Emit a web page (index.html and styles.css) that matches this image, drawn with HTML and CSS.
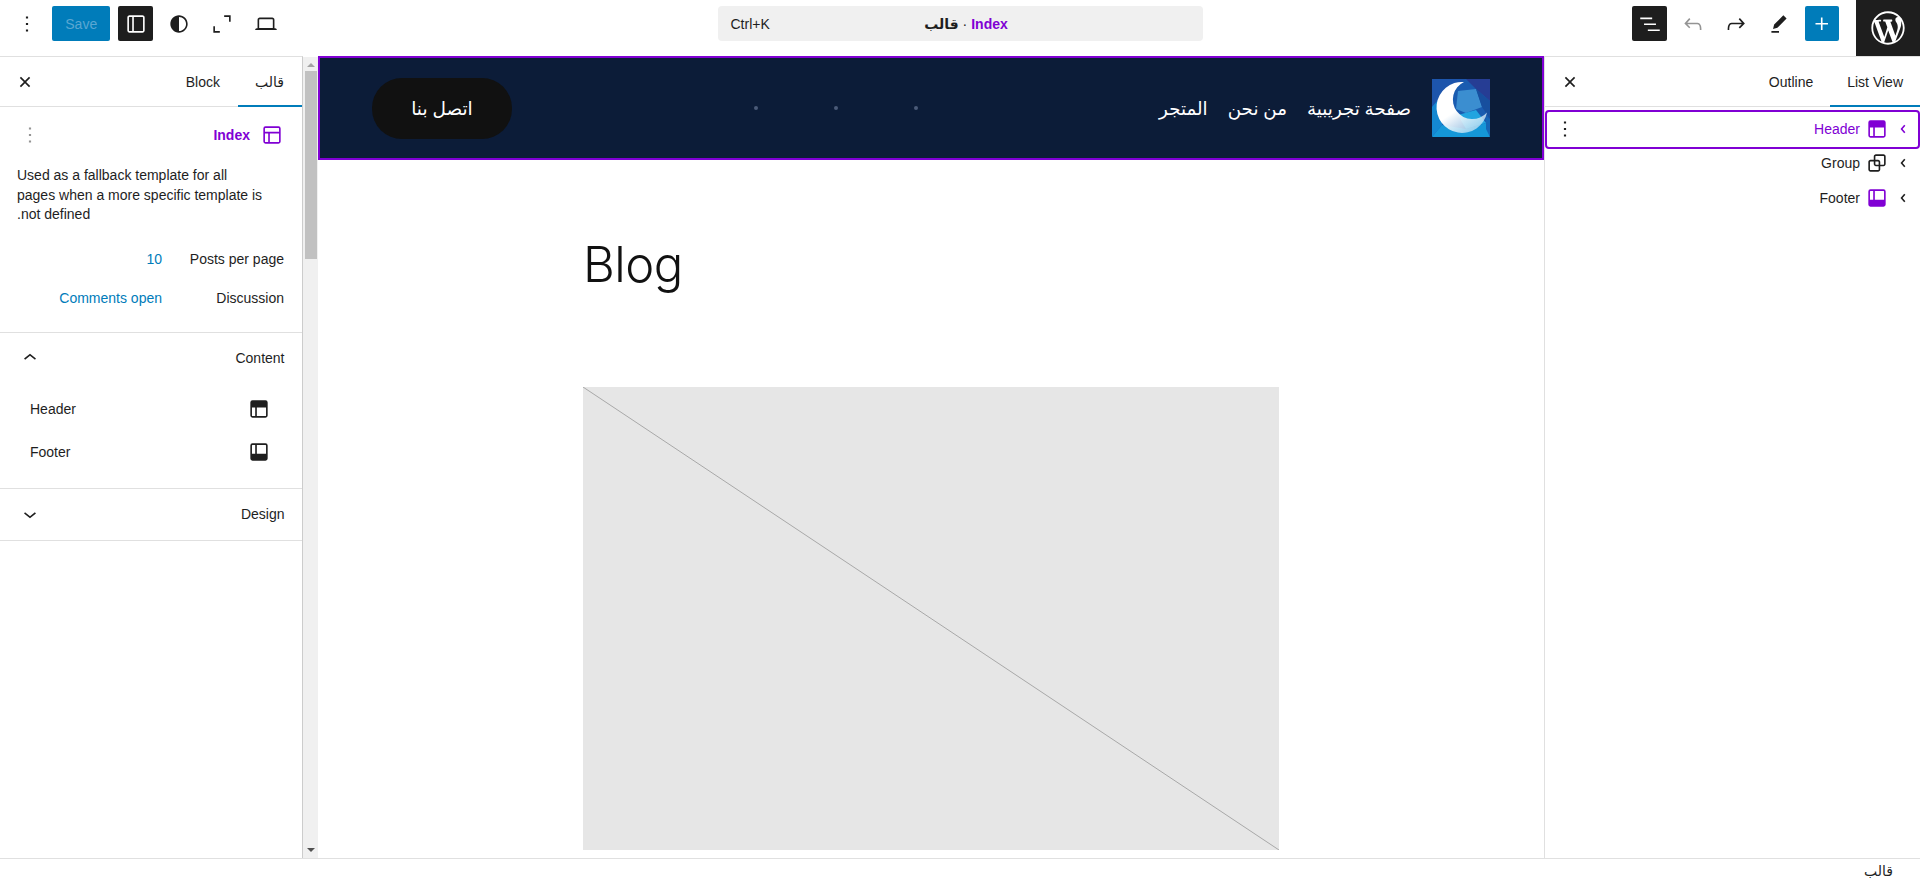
FILE: index.html
```html
<!DOCTYPE html>
<html lang="ar">

<head>
    <meta charset="UTF-8">
    <meta name="viewport" content="width=device-width, initial-scale=1.0">
    <title>Index - Site Editor</title>
    <link rel="stylesheet" href="styles.css">
</head>

<body>
    <svg class="icon-defs" aria-hidden="true">
        <symbol id="i-more" viewBox="0 0 24 24"><path d="M13 19h-2v-2h2v2zm0-6h-2v-2h2v2zm0-6h-2V5h2v2z"/></symbol>
        <symbol id="i-close" viewBox="0 0 24 24"><path d="M12 13.060l3.712 3.713 1.061-1.060L13.061 12l3.713-3.712-1.060-1.060L12 10.938 8.288 7.227l-1.061 1.060L10.939 12l-3.712 3.712 1.060 1.061L12 13.061z"/></symbol>
        <symbol id="i-layout" viewBox="0 0 24 24"><path fill-rule="evenodd" d="M18 5.500H6a.5.5 0 00-.5.5v3h13V6a.5.5 0 00-.5-.5zm.5 5H10v8h8a.5.5 0 00.5-.5v-7.500zm-10 0h-3V18a.5.5 0 00.5.5h2.500v-8zM6 4h12a2 2 0 012 2v12a2 2 0 01-2 2H6a2 2 0 01-2-2V6a2 2 0 012-2z"/></symbol>
        <symbol id="i-header" viewBox="0 0 24 24"><path fill-rule="evenodd" d="M18.500 10.500H10v8h8a.5.5 0 00.5-.5v-7.500zm-10 0h-3V18a.5.5 0 00.5.5h2.500v-8zM6 4h12a2 2 0 012 2v12a2 2 0 01-2 2H6a2 2 0 01-2-2V6a2 2 0 012-2z"/></symbol>
        <symbol id="i-footer" viewBox="0 0 24 24"><path fill-rule="evenodd" d="M18 5.500h-8v8h8.500V6a.5.5 0 00-.5-.5zm-9.500 8h-3V6a.5.5 0 01.5-.5h2.500v8zM6 4h12a2 2 0 012 2v12a2 2 0 01-2 2H6a2 2 0 01-2-2V6a2 2 0 012-2z"/></symbol>
        <symbol id="i-chevron" viewBox="0 0 24 24"><path d="m13.100 16-3.400-4 3.400-4 1.100 1-2.600 3 2.600 3-1.100 1z"/></symbol>
    </svg>

    <!-- Top toolbar -->
    <header class="topbar">
        <div class="tools">
            <button class="tool"><svg><use href="#i-more"/></svg></button>
            <button class="save-btn">Save</button>
            <button class="tool tool-dark"><svg viewBox="0 0 24 24"><path fill-rule="evenodd" d="M18 4H6c-1.100 0-2 .9-2 2v12c0 1.100.9 2 2 2h12c1.100 0 2-.9 2-2V6c0-1.100-.9-2-2-2zM8.500 18.500H6c-.3 0-.5-.2-.5-.5V6c0-.3.2-.5.5-.5h2.500v13zm10-.5c0 .3-.2.5-.5.5h-8v-13h8c.3 0 .5.2.5.5v12z"/></svg></button>
            <button class="tool"><svg viewBox="0 0 24 24"><path fill-rule="evenodd" d="M12 4c-4.400 0-8 3.600-8 8s3.600 8 8 8 8-3.600 8-8-3.600-8-8-8zm0 14.500V5.500c3.600 0 6.500 2.900 6.500 6.500s-2.900 6.500-6.500 6.500z"/></svg></button>
            <button class="tool"><svg viewBox="0 0 24 24"><path d="M14 4h6v6h-1.500V5.500H14V4zM4 14h1.500v4.500H10V20H4v-6z"/></svg></button>
            <button class="tool"><svg viewBox="0 0 24 24"><path fill-rule="evenodd" d="M20.500 16h-.7V8c0-1.100-.9-2-2-2H6.200c-1.100 0-2 .9-2 2v8h-.7c-.8 0-1.500.7-1.500 1.500h20c0-.8-.7-1.500-1.500-1.500zM5.700 8c0-.3.2-.5.5-.5h11.600c.3 0 .5.2.5.5v7.600H5.700V8z"/></svg></button>
        </div>

        <div class="command-bar">
            <span class="shortcut">Ctrl+K</span>
            <span class="doc-title" dir="rtl"><b class="accent">Index</b> · <b>قالب</b></span>
        </div>

        <div class="tools tools-end">
            <button class="tool tool-dark"><svg viewBox="0 0 24 24"><path d="M3 6h11v1.500H3V6Zm3.500 5.500h11V13h-11v-1.500ZM21 17H10v1.500h11V17Z"/></svg></button>
            <button class="tool tool-faded"><svg viewBox="0 0 24 24"><path d="M18.300 11.700c-.6-.6-1.400-.9-2.300-.9H6.700l2.900-3.300-1.100-1-4.500 5L8.500 16l1-1-2.700-2.700H16c.5 0 .9.200 1.300.5 1 1 1 3.400 1 4.500v.3h1.500v-.2c0-1.500 0-4.300-1.500-5.700z"/></svg></button>
            <button class="tool"><svg viewBox="0 0 24 24"><path d="M15.600 6.500l-1.100 1 2.900 3.300H8c-.9 0-1.700.3-2.300.9-1.400 1.500-1.400 4.200-1.400 5.600v.2h1.500v-.3c0-1.100 0-3.500 1-4.500.3-.3.7-.5 1.300-.5h9.200L14.500 15l1.100 1.100 4.600-4.600-4.600-5z"/></svg></button>
            <button class="tool"><svg viewBox="0 0 24 24"><path d="m19 7-3-3-8.500 8.500-1 4 4-1L19 7Zm-7 11.500H5V20h7v-1.500Z"/></svg></button>
            <button class="tool tool-blue"><svg viewBox="0 0 24 24"><path d="M11 12.500V17.500H12.500V12.500H17.500V11H12.500V6H11V11H6V12.500H11Z"/></svg></button>
            <a class="wp-logo" href="#"><svg viewBox="-2 -2 24 24"><path d="M20 10c0-5.510-4.490-10-10-10C4.480 0 0 4.490 0 10c0 5.520 4.480 10 10 10 5.510 0 10-4.480 10-10zM7.780 15.370L4.370 6.220c.55-.02 1.170-.08 1.170-.08.5-.06.44-1.130-.06-1.110 0 0-1.450.11-2.370.11-.18 0-.37 0-.58-.01C4.120 2.690 6.870 1.110 10 1.110c2.330 0 4.450.87 6.050 2.340-.68-.11-1.650.39-1.650 1.580 0 .74.45 1.360.9 2.100.35.61.55 1.360.55 2.460 0 1.490-1.400 5-1.400 5l-3.030-8.370c.54-.02.82-.17.82-.17.5-.05.44-1.250-.06-1.220 0 0-1.440.12-2.380.12-.87 0-2.330-.12-2.330-.12-.5-.03-.56 1.200-.06 1.220l.92.08 1.260 3.410zM17.410 10c.24-.64.74-1.870.43-4.250.7 1.290 1.050 2.710 1.050 4.250 0 3.290-1.730 6.240-4.400 7.780.97-2.590 1.940-5.200 2.920-7.780zM6.100 18.090C3.120 16.650 1.110 13.530 1.110 10c0-1.300.23-2.480.72-3.590C3.250 10.300 4.670 14.200 6.100 18.090zm4.030-6.630l2.580 6.980c-.86.29-1.760.45-2.710.45-.79 0-1.570-.11-2.290-.33.81-2.380 1.620-4.740 2.420-7.100z"/></svg></a>
        </div>
    </header>

    <div class="workspace">
        <!-- Settings sidebar -->
        <aside class="settings" dir="rtl">
            <div class="tabs">
                <span class="tab active">قالب</span>
                <span class="tab">Block</span>
                <button class="close-btn"><svg><use href="#i-close"/></svg></button>
            </div>

            <div class="template-card">
                <div class="template-head">
                    <svg class="accent-icon"><use href="#i-layout"/></svg>
                    <b class="accent">Index</b>
                    <svg class="more-faded"><use href="#i-more"/></svg>
                </div>
                <p class="template-desc">Used as a fallback template for all<br>pages when a more specific template is<br>not defined.</p>
                <div class="meta-row"><span class="meta-label">Posts per page</span><span class="link">10</span></div>
                <div class="meta-row"><span class="meta-label">Discussion</span><span class="link">Comments open</span></div>
            </div>

            <section class="panel panel-open">
                <div class="panel-head">
                    <span>Content</span>
                    <svg viewBox="0 0 24 24"><path d="M6.500 12.400L12 8l5.500 4.400-.9 1.200L12 10l-4.500 3.600-1-1.200z"/></svg>
                </div>
                <div class="part-row"><svg><use href="#i-header"/></svg><span>Header</span></div>
                <div class="part-row"><svg><use href="#i-footer"/></svg><span>Footer</span></div>
            </section>

            <section class="panel">
                <div class="panel-head">
                    <span>Design</span>
                    <svg viewBox="0 0 24 24"><path d="M17.500 11.600L12 16l-5.500-4.400.9-1.200L12 14l4.500-3.600 1 1.200z"/></svg>
                </div>
            </section>
        </aside>

        <div class="scrollbar">
            <span class="arrow-up"></span>
            <span class="thumb"></span>
            <span class="arrow-down"></span>
        </div>

        <!-- Editor canvas -->
        <main class="canvas">
            <div class="site-header">
                <nav class="site-nav" dir="rtl">
                    <svg class="site-logo" viewBox="0 0 58 58">
                        <defs>
                            <linearGradient id="moon" x1="0.2" y1="0.1" x2="0.8" y2="1">
                                <stop offset="0.45" stop-color="#ffffff"/>
                                <stop offset="1" stop-color="#bfe0f3" stop-opacity="0.7"/>
                            </linearGradient>
                        </defs>
                        <rect width="58" height="58" rx="3" fill="#1a5cb0"/>
                        <polygon points="0,0 34,0 12,14 0,28" fill="#1d55ac"/>
                        <polygon points="34,0 58,0 58,22 44,10" fill="#263d94"/>
                        <polygon points="26,12 44,10 50,28 34,34 24,30" fill="#3b8ed0"/>
                        <polygon points="44,10 58,22 58,40 50,28" fill="#174f9e"/>
                        <polygon points="0,28 12,14 10,46 0,58" fill="#1488d2"/>
                        <polygon points="26,36 44,31 54,44 34,50" fill="#22a4e0"/>
                        <polygon points="10,46 34,50 54,44 58,58 0,58" fill="#1597d8"/>
                        <polygon points="54,38 58,40 58,58 54,50" fill="#1465b5"/>
                        <path d="M32 3A25.500 25.500 0 1 0 55 33.500A19.500 19.500 0 1 1 32 3Z" fill="url(#moon)"/>
                    </svg>
                    <a href="#">صفحة تجريبية</a>
                    <a href="#">من نحن</a>
                    <a href="#">المتجر</a>
                </nav>
                <div class="nav-dots">
                    <span class="dot"></span>
                    <span class="dot"></span>
                    <span class="dot"></span>
                </div>
                <a class="contact-btn" href="#">اتصل بنا</a>
            </div>

            <div class="post-column">
                <h1 class="blog-title">Blog</h1>
                <svg class="placeholder" viewBox="0 0 696 463" preserveAspectRatio="none">
                    <line x1="0" y1="0" x2="696" y2="463" stroke="#a8a8a8" stroke-width="1"/>
                </svg>
            </div>
        </main>

        <!-- List view sidebar -->
        <aside class="listview" dir="rtl">
            <div class="tabs">
                <span class="tab active">List View</span>
                <span class="tab">Outline</span>
                <button class="close-btn"><svg><use href="#i-close"/></svg></button>
            </div>
            <ul class="tree">
                <li class="tree-row selected">
                    <svg><use href="#i-chevron"/></svg>
                    <svg><use href="#i-header"/></svg>
                    <span>Header</span>
                    <svg class="row-more"><use href="#i-more"/></svg>
                </li>
                <li class="tree-row">
                    <svg><use href="#i-chevron"/></svg>
                    <svg viewBox="0 0 24 24"><path fill-rule="evenodd" d="M18 4h-7c-1.100 0-2 .9-2 2v3H6c-1.100 0-2 .9-2 2v7c0 1.100.9 2 2 2h7c1.100 0 2-.9 2-2v-3h3c1.100 0 2-.9 2-2V6c0-1.100-.9-2-2-2zm-4.500 14c0 .3-.2.5-.5.5H6c-.3 0-.5-.2-.5-.5v-7c0-.3.2-.5.5-.5h3V13c0 1.100.9 2 2 2h2.500v3zm0-4.500H11c-.3 0-.5-.2-.5-.5v-2.500H13c.3 0 .5.2.5.5v2.500zm5-.5c0 .3-.2.5-.5.5h-3V11c0-1.100-.9-2-2-2h-2.500V6c0-.3.2-.5.5-.5h7c.3 0 .5.2.5.5v7z"/></svg>
                    <span>Group</span>
                </li>
                <li class="tree-row">
                    <svg><use href="#i-chevron"/></svg>
                    <svg class="accent-icon"><use href="#i-footer"/></svg>
                    <span>Footer</span>
                </li>
            </ul>
        </aside>
    </div>

    <footer class="statusbar" dir="rtl">قالب</footer>
</body>

</html>
```

FILE: styles.css
```css
* {
    box-sizing: border-box;
}

body {
    margin: 0;
    height: 881px;
    overflow: hidden;
    display: flex;
    flex-direction: column;
    font-family: "Liberation Sans", "Noto Sans", "DejaVu Sans", sans-serif;
    font-size: 14px;
    color: #1e1e1e;
    background: #fff;
}

svg {
    width: 26px;
    height: 26px;
    fill: currentColor;
    flex: none;
    display: block;
}

button {
    border: 0;
    padding: 0;
    background: none;
    color: inherit;
    font: inherit;
}

a {
    color: inherit;
    text-decoration: none;
}

.icon-defs {
    display: none;
}

.accent,
.accent-icon {
    color: #8000d4;
}

/* top toolbar */
.topbar {
    height: 56px;
    flex: none;
    display: grid;
    grid-template-columns: 1fr 485px 1fr;
    align-items: start;
}

.tools {
    display: flex;
    align-items: flex-start;
    padding-left: 9px;
}

.tools-end {
    justify-content: flex-end;
    padding-left: 0;
}

.tool {
    width: 35px;
    height: 35px;
    margin-top: 6px;
    margin-right: 8.25px;
    display: flex;
    align-items: center;
    justify-content: center;
    border-radius: 2px;
}

.tool-dark {
    background: #1e1e1e;
    color: #fff;
}

.tool-faded {
    color: #949494;
}

.tool-blue {
    width: 34px;
    background: #007cba;
    color: #fff;
    margin-right: 17px;
}

.save-btn {
    width: 58px;
    height: 35px;
    margin-top: 6px;
    margin-right: 8px;
    border-radius: 2px;
    background: #007cba;
    color: #5aa7d2;
}

.command-bar {
    height: 35px;
    margin-top: 6px;
    padding: 0 13px;
    border-radius: 4px;
    background: #f0f0f0;
    display: grid;
    grid-template-columns: 1fr auto 1fr;
    align-items: center;
}

.doc-title {
    grid-column: 2;
    margin-left: 12px;
}

.wp-logo {
    width: 64px;
    height: 56px;
    background: #1e1e1e;
    color: #fff;
    display: flex;
    align-items: center;
    justify-content: center;
}

.wp-logo svg {
    width: 40px;
    height: 40px;
}

/* columns */
.workspace {
    flex: 1;
    min-height: 0;
    display: flex;
}

.settings {
    width: 303px;
    flex: none;
    border-top: 1px solid #e0e0e0;
    border-right: 1px solid #ccc;
}

.tabs {
    height: 50px;
    display: flex;
    align-items: stretch;
    border-bottom: 1px solid #e0e0e0;
}

.tab {
    display: flex;
    align-items: center;
    padding: 0 17px;
    margin-bottom: -1px;
}

.settings .tab {
    padding: 0 18px 0 17px;
}

.tab.active {
    border-bottom: 2px solid #007cba;
    padding-top: 2px;
}

.close-btn {
    margin-inline-start: auto;
    margin-inline-end: 12px;
    align-self: center;
}

.template-card {
    padding: 16px 17px 14px 17px;
    border-bottom: 1px solid #e0e0e0;
}

.template-head {
    display: flex;
    align-items: center;
    gap: 9px;
    height: 24px;
}

.more-faded {
    margin-inline-start: auto;
    color: #949494;
}

.template-desc {
    margin: 19px 0 0;
    line-height: 19.5px;
    text-align: left;
}

.meta-row {
    display: flex;
    height: 39px;
    align-items: center;
    padding-right: 1px;
}

.template-desc + .meta-row {
    margin-top: 15px;
}

.meta-label {
    width: 122px;
    flex: none;
}

.link {
    color: #007cba;
}

.panel {
    border-bottom: 1px solid #e0e0e0;
}

.panel-head {
    height: 51px;
    padding: 0 17.5px 0 17px;
    display: flex;
    align-items: center;
    justify-content: space-between;
}

.panel-open {
    padding-bottom: 14px;
}

.panel-head + .part-row {
    margin-top: 4px;
}

.part-row {
    height: 43px;
    padding: 0 30px;
    display: flex;
    align-items: center;
    justify-content: space-between;
}

.scrollbar {
    width: 15px;
    flex: none;
    margin-top: 1px;
    background: #f0f0f0;
    display: flex;
    flex-direction: column;
    align-items: center;
}

.arrow-up {
    margin-top: 6px;
    border: 4px solid transparent;
    border-top: 0;
    border-bottom: 4px solid #a3a3a3;
}

.thumb {
    width: 12px;
    height: 188px;
    margin-top: 4px;
    background: #c1c1c1;
}

.arrow-down {
    margin-top: auto;
    margin-bottom: 6px;
    border: 4px solid transparent;
    border-bottom: 0;
    border-top: 4px solid #505050;
}

/* canvas */
.canvas {
    width: 1226px;
    flex: none;
}

.site-header {
    height: 104px;
    border: 2px solid #8000d4;
    background: #0c1c38;
    color: #fff;
    display: flex;
    flex-direction: row-reverse;
    align-items: center;
    padding: 0 52px;
}

.site-nav {
    display: flex;
    align-items: center;
    gap: 20px;
    font-family: "Noto Sans", "DejaVu Sans", sans-serif;
    font-size: 18.3px;
}

.site-nav a {
    padding-bottom: 2px;
}

.site-logo {
    width: 58px;
    height: 58px;
    margin-inline-end: 1px;
}

.nav-dots {
    display: flex;
    gap: 76px;
    margin-left: 242px;
    margin-right: auto;
}

.dot {
    width: 4px;
    height: 4px;
    border-radius: 50%;
    background: #4b5a78;
}

.contact-btn {
    width: 140px;
    height: 61px;
    padding-bottom: 2px;
    border-radius: 30px;
    background: #111;
    font-family: "Noto Sans", "DejaVu Sans", sans-serif;
    font-size: 18.5px;
    display: flex;
    align-items: center;
    justify-content: center;
}

.post-column {
    width: 696px;
    margin: 0 auto;
}

.blog-title {
    margin: 75px 0 92px;
    font-family: Inter, sans-serif;
    font-size: 49px;
    font-weight: 300;
    letter-spacing: -0.5px;
    line-height: 60px;
    color: #111;
}

.placeholder {
    width: 696px;
    height: 463px;
    background: #e6e6e6;
}

/* list view */
.listview {
    flex: 1;
    border-left: 1px solid #e0e0e0;
    border-top: 1px solid #e0e0e0;
}

.tree {
    list-style: none;
    margin: 0;
    padding: 5px 2px 0 2px;
}

.tree-row {
    height: 35px;
    display: flex;
    align-items: center;
    padding-right: 2px;
}

.tree-row span {
    margin-right: 4px;
}

.tree-row.selected {
    margin-bottom: -2px;
    padding-bottom: 1px;
    color: #8000d4;
    outline: 2px solid #8000d4;
    border-radius: 2px;
}

.row-more {
    margin-inline-start: auto;
    margin-inline-end: 5px;
    color: #1e1e1e;
}

.statusbar {
    height: 23px;
    flex: none;
    border-top: 1px solid #e0e0e0;
    padding: 4px 27px 0;
}
```
